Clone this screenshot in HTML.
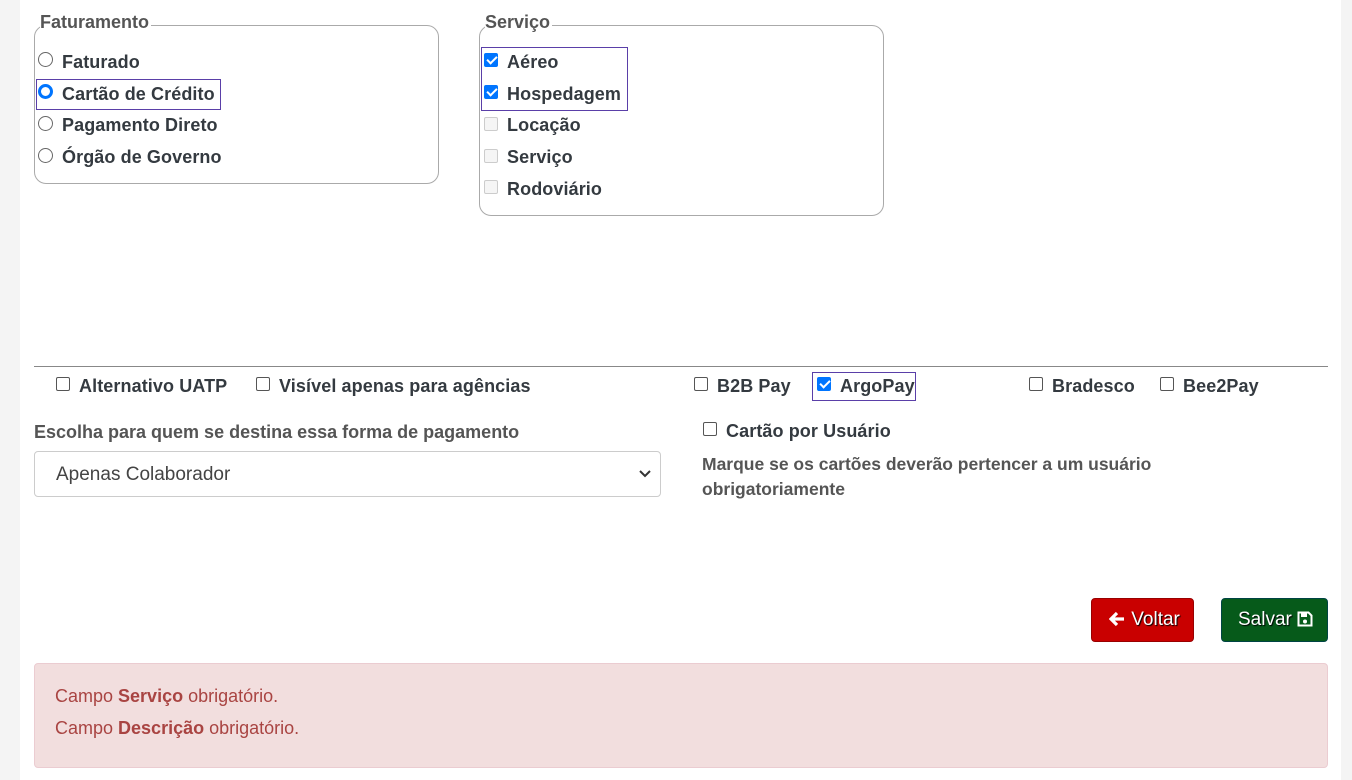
<!DOCTYPE html>
<html><head><meta charset="utf-8"><style>
body{margin:0;width:1352px;height:780px;background:#f4f4f4;font-family:"Liberation Sans",sans-serif;overflow:hidden;position:relative}
.card{position:absolute;left:20px;top:0;width:1321px;height:780px;background:#fff}
.a{position:absolute;white-space:nowrap}
.lb{font-weight:bold;font-size:18px;letter-spacing:0.1px;color:#343a40}
.fs{position:absolute;border:1px solid #aaa;border-radius:12px}
.leg{position:absolute;background:#fff;font-weight:bold;font-size:18px;color:#555;padding-right:2px}
.rd{position:absolute;width:15px;height:15px;border:1px solid #666;border-radius:50%;box-sizing:border-box;background:#fff}
.cb{position:absolute;width:14px;height:14px;border:1px solid #555;border-radius:2px;box-sizing:border-box;background:#fff}
.cb.on{background:#0075ff;border-color:#0075ff}
.cb.dis{border-color:#ccc;background:#f5f5f5}
.cb.on:after{content:"";position:absolute;left:3.5px;top:0px;width:4px;height:8px;border:solid #fff;border-width:0 2px 2px 0;transform:rotate(45deg)}
.box{position:absolute;border:1px solid #5a3fa8}
</style></head><body>
<div class="card"></div>
<div class="fs" style="left:34px;top:25px;width:403px;height:157px"></div>
<div class="leg a" style="left:40px;top:12px">Faturamento</div>
<div class="rd" style="left:38px;top:52px"></div><div class="a lb" style="left:62px;top:52px">Faturado</div>
<div class="box" style="left:36px;top:79px;width:183px;height:29px"></div>
<div class="rd" style="left:38px;top:84px;border:3px solid #0075ff"></div><div class="a lb" style="left:62px;top:84px">Cartão de Crédito</div>
<div class="rd" style="left:38px;top:116px"></div><div class="a lb" style="left:62px;top:115px">Pagamento Direto</div>
<div class="rd" style="left:38px;top:148px"></div><div class="a lb" style="left:62px;top:147px">Órgão de Governo</div>

<div class="fs" style="left:479px;top:25px;width:403px;height:189px"></div>
<div class="leg a" style="left:485px;top:12px">Serviço</div>
<div class="box" style="left:481px;top:47px;width:145px;height:62px"></div>
<div class="cb on" style="left:484px;top:53px"></div><div class="a lb" style="left:507px;top:52px">Aéreo</div>
<div class="cb on" style="left:484px;top:85px"></div><div class="a lb" style="left:507px;top:84px">Hospedagem</div>
<div class="cb dis" style="left:484px;top:117px"></div><div class="a lb" style="left:507px;top:115px">Locação</div>
<div class="cb dis" style="left:484px;top:149px"></div><div class="a lb" style="left:507px;top:147px">Serviço</div>
<div class="cb dis" style="left:484px;top:180px"></div><div class="a lb" style="left:507px;top:179px">Rodoviário</div>

<div class="a" style="left:34px;top:366px;width:1294px;height:1px;background:#888"></div>
<div class="cb" style="left:56px;top:377px"></div><div class="a lb" style="left:79px;top:376px">Alternativo UATP</div>
<div class="cb" style="left:256px;top:377px"></div><div class="a lb" style="left:279px;top:376px">Visível apenas para agências</div>
<div class="cb" style="left:694px;top:377px"></div><div class="a lb" style="left:717px;top:376px">B2B Pay</div>
<div class="box" style="left:812px;top:372px;width:102px;height:27px"></div>
<div class="cb on" style="left:817px;top:377px"></div><div class="a lb" style="left:840px;top:376px">ArgoPay</div>
<div class="cb" style="left:1029px;top:377px"></div><div class="a lb" style="left:1052px;top:376px">Bradesco</div>
<div class="cb" style="left:1160px;top:377px"></div><div class="a lb" style="left:1183px;top:376px">Bee2Pay</div>

<div class="a" style="left:34px;top:422px;font-weight:bold;font-size:18px;color:#555">Escolha para quem se destina essa forma de pagamento</div>
<div class="a" style="left:34px;top:451px;width:625px;height:44px;border:1px solid #ccc;border-radius:4px;box-sizing:content-box"></div>
<div class="a" style="left:56px;top:464px;font-size:19px;color:#444">Apenas Colaborador</div>
<svg class="a" style="left:638px;top:469px" width="14" height="10" viewBox="0 0 14 10"><path d="M2 2 L7 7 L12 2" fill="none" stroke="#333" stroke-width="2"/></svg>

<div class="cb" style="left:703px;top:422px"></div><div class="a lb" style="left:726px;top:421px">Cartão por Usuário</div>
<div class="a" style="left:702px;top:452px;font-weight:bold;font-size:17.5px;color:#555;line-height:25px">Marque se os cartões deverão pertencer a um usuário<br>obrigatoriamente</div>

<div class="a" style="left:1091px;top:598px;width:103px;height:44px;background:#c90000;border:1px solid #900;border-radius:4px;box-sizing:border-box;color:#fff;font-size:19px;line-height:42px;padding-left:17px;text-shadow:1px 1px 1px #000"><svg width="17" height="16" viewBox="0 0 17 16" style="vertical-align:-2px"><path d="M8 2 L2 8 L8 14 M2 8 H15" fill="none" stroke="#fff" stroke-width="3.2"/></svg> Voltar</div>
<div class="a" style="left:1221px;top:598px;width:107px;height:44px;background:#065a1a;border:1px solid #044;border-radius:4px;box-sizing:border-box;color:#fff;font-size:19px;line-height:42px;padding-left:16px;text-shadow:1px 1px 1px #000">Salvar <svg width="16" height="16" viewBox="0 0 16 16" style="vertical-align:-2px"><path d="M1.5 1.5h10l3 3v10h-13z" fill="none" stroke="#fff" stroke-width="2"/><rect x="4" y="2" width="6" height="4" fill="#fff"/><circle cx="8" cy="10.5" r="2" fill="#fff"/></svg></div>

<div class="a" style="left:34px;top:663px;width:1294px;height:105px;background:#f2dede;border:1px solid #ebccd1;border-radius:4px;box-sizing:border-box"></div>
<div class="a" style="left:55px;top:686px;font-size:18px;color:#a94442">Campo <b>Serviço</b> obrigatório.</div>
<div class="a" style="left:55px;top:718px;font-size:18px;color:#a94442">Campo <b>Descrição</b> obrigatório.</div>
</body></html>
